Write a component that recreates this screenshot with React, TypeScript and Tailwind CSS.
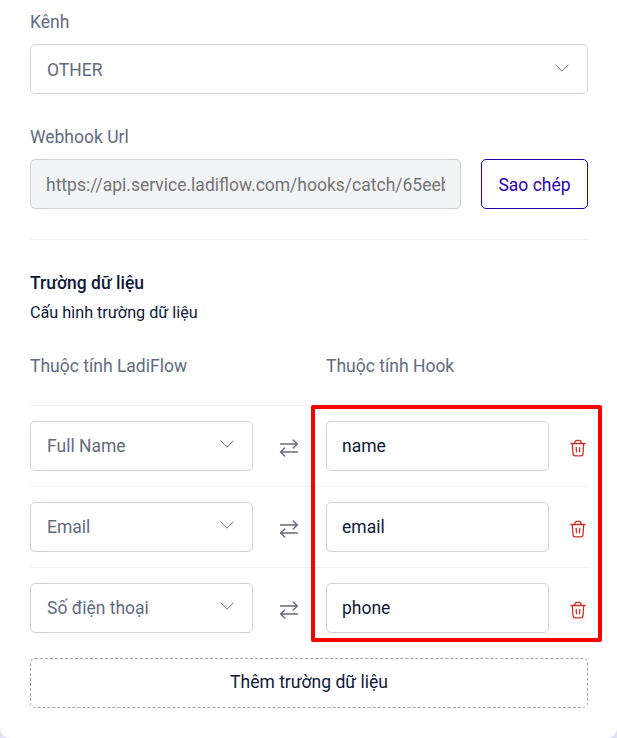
const fields = [
  { label: 'Full Name', hook: 'name' },
  { label: 'Email', hook: 'email' },
  { label: 'Số điện thoại', hook: 'phone' },
];

function Chevron() {
  return (
    <svg className="mb-1 h-2 w-3.5 shrink-0" viewBox="0 0 14 8" fill="none" stroke="#717171" strokeWidth="1">
      <path d="M0.5 0.7 7 7.2 13.5 0.7" />
    </svg>
  );
}

function Swap() {
  return (
    <svg className="mt-1 mr-0.5 h-[18px] w-5" viewBox="0 0 20 18" fill="none" stroke="#616b80" strokeWidth="1.4" strokeLinecap="round" strokeLinejoin="round">
      <path d="M1.5 5H18.4M14.2 1 18.4 5 14.2 9M18.4 13H1.5M5.7 9 1.5 13 5.7 17" />
    </svg>
  );
}

function Trash() {
  return (
    <svg className="mt-1 h-[18px] w-4" viewBox="0 0 16 18" fill="none" stroke="#d32c24" strokeWidth="1.3" strokeLinecap="round" strokeLinejoin="round">
      <path d="M1 4.5H15M4.6 4.2C5 2 5.8 1.3 7 1.3H9C10.2 1.3 11 2 11.4 4.2M2.3 4.8 3 14.5C3.1 16.1 3.9 16.8 5.3 16.8H10.7C12.1 16.8 12.9 16.1 13 14.5L13.7 4.8M6.2 8.5 6.5 12.8M9.8 8.5 9.5 12.8" />
    </svg>
  );
}

function Select({ value, className = '' }: { value: string; className?: string }) {
  return (
    <div className={`flex h-[50px] w-full items-center justify-between rounded-[5px] border border-[#d1d3da] pr-[18px] pl-4 text-[#616b80] ${className}`}>
      <span>{value}</span>
      <Chevron />
    </div>
  );
}

export default function App() {
  return (
    <div className="h-[738px] w-[617px] overflow-hidden bg-[#e2e0f9] font-['Roboto','Noto_Sans',sans-serif] text-[17.5px] leading-[26px] text-[#0d1939]">
      <main className="relative h-full rounded-b-[10px] bg-white pt-[9px] pr-[29px] pl-[30px]">
        <div className="mb-[9px] text-[#616b80]">Kênh</div>
        <Select value="OTHER" className="pt-0.5" />
        <div className="mt-[30px] mb-[9px] text-[#616b80]">Webhook Url</div>
        <div className="flex gap-5">
          <div className="flex h-[50px] w-[431px] items-center rounded-[5px] border border-[#d1d3da] bg-[#f2f3f5] px-[15px] pt-0.5 text-[#757575]">
            <span className="overflow-hidden whitespace-nowrap">https://api.service.ladiflow.com/hooks/catch/65eeb</span>
          </div>
          <button className="h-[50px] w-[107px] rounded-[5px] border border-[#2b00b3] pt-0.5 text-[#2b00b3]">Sao chép</button>
        </div>
        <div className="mt-[30px] border-t border-[#ededf0]" />
        <h2 className="mt-[30px] font-medium">Trường dữ liệu</h2>
        <p className="mt-1 text-[16.2px]">Cấu hình trường dữ liệu</p>
        <div className="mt-[27px] flex text-[#616b80]">
          <div className="w-[296px]">Thuộc tính LadiFlow</div>
          <div>Thuộc tính Hook</div>
        </div>
        <div className="mt-[26px]">
          {fields.map((field) => (
            <div key={field.hook} className="flex h-[81px] items-center border-t border-[#f1f1f3]">
              <div className="w-[223px]">
                <Select value={field.label} />
              </div>
              <div className="flex w-[73px] justify-center"><Swap /></div>
              <div className="flex h-[50px] w-[223px] items-center rounded-[5px] border border-[#d1d3da] px-[15px]">{field.hook}</div>
              <div className="ml-[21px]"><Trash /></div>
            </div>
          ))}
        </div>
        <button className="mt-2.5 h-[50px] w-full rounded-[5px] border border-dashed border-[#a6a6a6] pb-0.5">Thêm trường dữ liệu</button>
        <div className="absolute top-[405px] left-[311px] h-[237px] w-[291px] rounded-[2px] border-4 border-[#ff0000]" />
      </main>
    </div>
  );
}
